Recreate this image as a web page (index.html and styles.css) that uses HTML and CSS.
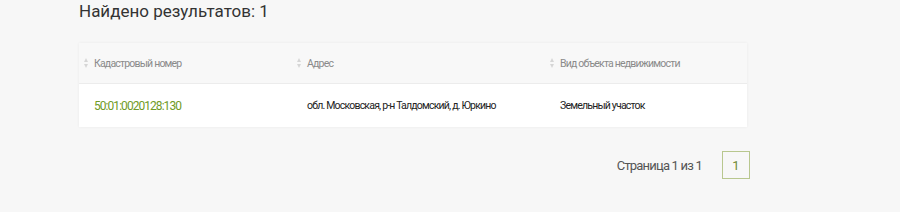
FILE: index.html
```html
<!DOCTYPE html>
<html lang="ru">
<head>
    <meta charset="UTF-8">
    <title>Результаты поиска</title>
    <link rel="stylesheet" href="styles.css">
</head>
<body>

<!-- Results -->
<div class="results">
    <h2 class="results-title">Найдено результатов: 1</h2>

    <table class="results-table">
        <thead>
            <tr>
                <th class="col-number"><span class="sort"></span>Кадастровый номер</th>
                <th class="col-address"><span class="sort"></span>Адрес</th>
                <th class="col-type"><span class="sort"></span>Вид объекта недвижимости</th>
            </tr>
        </thead>
        <tbody>
            <tr>
                <td class="cad-number"><a href="#">50:01:0020128:130</a></td>
                <td>обл. Московская, р-н Талдомский, д. Юркино</td>
                <td>Земельный участок</td>
            </tr>
        </tbody>
    </table>

    <!-- Pagination -->
    <div class="pager">
        <span class="pager-info">Страница 1 из 1</span>
        <a href="#" class="pager-page">1</a>
    </div>
</div>

</body>
</html>
```

FILE: styles.css
```css
body {
    font-family: Roboto, "Liberation Sans", sans-serif;
    background-color: #f7f7f7;
    margin: 0;
    padding: 0;
}
.results {
    width: 668px;
    margin-left: 79px;
}
.results-title {
    font-size: 17px;
    font-weight: 400;
    color: #333;
    margin: 0;
    line-height: 22px;
}
.results-table {
    width: 100%;
    margin-top: 21px;
    border-collapse: collapse;
    box-shadow: 0 0 3px rgba(0, 0, 0, 0.06);
}
.results-table th {
    background-color: #f8f8f8;
    color: #8a8a8a;
    font-size: 10.5px;
    font-weight: 400;
    letter-spacing: -0.8px;
    text-align: left;
    height: 40px;
    padding: 0 0 0 5px;
    border-bottom: 1px solid #ececec;
}
.col-number {
    width: 208px;
}
.col-address {
    width: 248px;
}
.sort {
    display: inline-block;
    width: 5px;
    height: 10px;
    margin-right: 5px;
    vertical-align: -1px;
    position: relative;
}
.sort::before, .sort::after {
    content: "";
    position: absolute;
    left: 0;
    border-left: 2.5px solid transparent;
    border-right: 2.5px solid transparent;
}
.sort::before {
    top: 0;
    border-bottom: 4px solid #d6d6d6;
}
.sort::after {
    bottom: 0;
    border-top: 4px solid #d6d6d6;
}
.results-table td {
    background-color: #fff;
    color: #222;
    font-size: 10.5px;
    letter-spacing: -0.8px;
    height: 43px;
    padding: 0 0 0 15px;
}
.cad-number a {
    color: #6f9a25;
    font-size: 12px;
    letter-spacing: -0.95px;
    text-decoration: none;
}
.pager {
    display: flex;
    justify-content: flex-end;
    align-items: center;
    margin-top: 24px;
    margin-right: -3px;
}
.pager-info {
    font-size: 13px;
    letter-spacing: -0.8px;
    color: #555;
    margin-right: 20px;
}
.pager-page {
    width: 26px;
    height: 26px;
    border: 1px solid #b8c78e;
    color: #6f8a35;
    font-size: 13px;
    text-decoration: none;
    display: flex;
    align-items: center;
    justify-content: center;
}
```
